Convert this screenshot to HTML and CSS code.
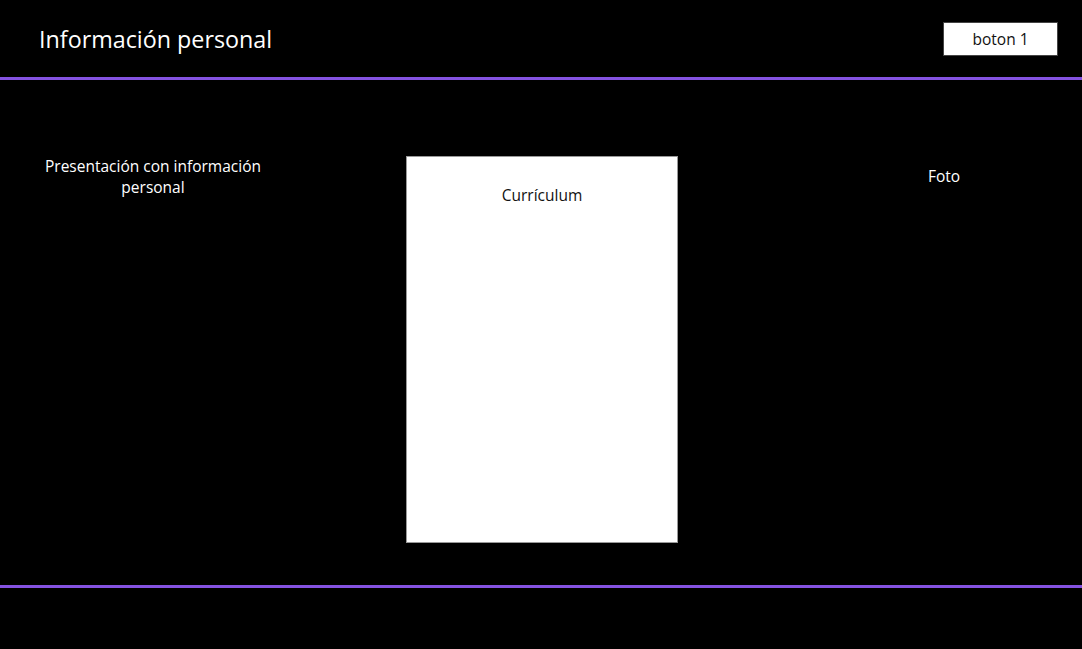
FILE: index.html
```html
<!DOCTYPE html>
<html lang="es">
<head>
<meta charset="utf-8">
<title>Información personal</title>
<link rel="stylesheet" href="styles.css">
</head>
<body>
<header class="top">
  <h1 class="title">Información personal</h1>
  <button class="btn">boton 1</button>
</header>
<main class="content">
  <section class="col col-left">Presentación con información personal</section>
  <section class="cv">Currículum</section>
  <section class="col col-right">Foto</section>
</main>
<footer class="bottom"></footer>
</body>
</html>
```

FILE: styles.css
```css
* { box-sizing: border-box; }
html, body { margin: 0; padding: 0; }
body {
  background: #000;
  color: #fff;
  font-family: "Open Sans", "Liberation Sans", sans-serif;
  width: 1082px;
  height: 649px;
  overflow: hidden;
}
.top {
  height: 80px;
  display: flex;
  align-items: center;
  justify-content: space-between;
  padding: 0 24px 0 39px;
  border-bottom: 3px solid #8452e0;
}
.title {
  margin: 0;
  font-size: 23.3px;
  font-weight: 400;
  line-height: 31px;
  position: relative;
  top: 1px;
}
.btn {
  width: 115px;
  height: 34px;
  background: #fff;
  color: #111;
  border: 1px solid #444;
  font-family: "Open Sans", "Liberation Sans", sans-serif;
  font-size: 15.5px;
  padding: 0;
}
.content {
  height: 508px;
  display: flex;
  align-items: flex-start;
  padding: 76px 0 0 18px;
  border-bottom: 3px solid #8452e0;
}
.col {
  width: 270px;
  text-align: center;
  font-size: 15.5px;
  line-height: 21px;
}
.cv {
  margin-left: 118px;
  width: 272px;
  height: 387px;
  background: #fff;
  color: #111;
  border: 1px solid #999;
  text-align: center;
  font-size: 15.5px;
  padding-top: 27px;
}
.col-right {
  margin-left: 131px;
  padding-top: 10px;
}
.bottom {
  height: 61px;
}
```
